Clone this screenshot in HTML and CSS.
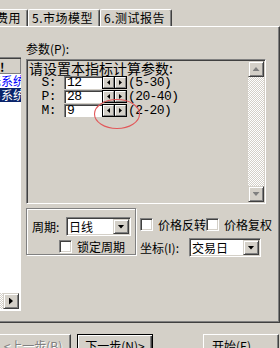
FILE: index.html
```html
<!DOCTYPE html>
<html>
<head>
<meta charset="utf-8">
<link rel="stylesheet" href="styles.css">
</head>
<body>
<div class="tabstrip">
  <div class="tab">4.交易费用</div>
  <div class="tab">5.市场模型</div>
  <div class="tab">6.测试报告</div>
</div>
<div class="panel">
  <div class="list">
    <div class="lhead">!</div>
    <div class="lrow link"><span>指标系统</span></div>
    <div class="lrow sel"><span>交易系统</span></div>
    <div class="lfill"></div>
    <div class="hscroll"><div class="dither"></div><div class="sbtn"><i class="arr-r"></i></div><div class="hwhite"></div></div>
  </div>
  <div class="main">
    <div class="plabel">参数(P):</div>
    <div class="pbox">
      <div class="pcontent">
        <div class="phead">请设置本指标计算参数:</div>
        <div class="prow"><span class="pname">S:</span><span class="pinput">12</span><span class="spin"><b><i class="tl"></i></b><b><i class="tr"></i></b></span><span class="prange">(5-30)</span></div>
        <div class="prow"><span class="pname">P:</span><span class="pinput">28</span><span class="spin"><b><i class="tl"></i></b><b><i class="tr"></i></b></span><span class="prange">(20-40)</span></div>
        <div class="prow"><span class="pname">M:</span><span class="pinput">9</span><span class="spin"><b><i class="tl"></i></b><b><i class="tr"></i></b></span><span class="prange">(2-20)</span></div>
      </div>
      <div class="vscroll">
        <div class="sbtn"><i class="arr-up"></i></div>
        <div class="track"></div>
        <div class="sbtn"><i class="arr-down"></i></div>
      </div>
    </div>
    <div class="lower">
      <div class="group">
        <div class="grow"><span class="glabel">周期:</span><div class="combo c1"><span>日线</span><b class="ddbtn"><i></i></b></div></div>
        <div class="grow2"><span class="cb"></span><span>锁定周期</span></div>
      </div>
      <div class="rcol">
        <div class="rrow"><span class="cb"></span><span class="cblabel">价格反转</span><span class="cb"></span><span class="cblabel">价格复权</span></div>
        <div class="rrow2"><span class="clabel">坐标(I):</span><div class="combo c2"><span>交易日</span><b class="ddbtn"><i></i></b></div></div>
      </div>
    </div>
  </div>
</div>
<div class="buttons">
  <div class="btn prev disabled">&lt;上一步(B)</div>
  <div class="btn next">下一步(N)&gt;</div>
  <div class="btn start">开始(E)</div>
</div>
<svg class="mark" width="48" height="32" viewBox="0 0 48 32"><ellipse cx="24" cy="16" rx="22.5" ry="14.5" fill="none" stroke="#e2585a" stroke-width="1.1"/></svg>
</body>
</html>
```
FILE: styles.css
```css
body {
  margin: 0;
  width: 280px;
  height: 348px;
  overflow: hidden;
  background: #d4d0c8;
  font-family: "Noto Sans CJK SC", sans-serif;
  font-size: 12px;
  color: #000;
  position: relative;
}
.tabstrip {
  display: flex;
  height: 26px;
  padding-top: 9px;
  box-sizing: border-box;
  margin-left: -44px;
}
.tab {
  width: 72px;
  height: 17px;
  flex: none;
  box-sizing: border-box;
  border-top: 1px solid #fff;
  border-left: 1px solid #fff;
  border-right: 1px solid #404040;
  box-shadow: inset -1px 0 #808080;
  border-radius: 2px 2px 0 0;
  padding-left: 3px;
  line-height: 16px;
  white-space: nowrap;
  overflow: hidden;
  letter-spacing: 0.5px;
}
.panel {
  display: flex;
  height: 297px;
  box-sizing: border-box;
  border-top: 1px solid #fff;
  border-right: 1px solid #404040;
  border-bottom: 1px solid #404040;
  box-shadow: inset -1px -1px #808080;
}
.list {
  width: 21px;
  height: 254px;
  margin-top: 30px;
  box-sizing: border-box;
  background: #fff;
  border-top: 1px solid #808080;
  box-shadow: inset 0 1px #404040;
  padding-top: 1px;
  display: flex;
  flex-direction: column;
  overflow: hidden;
  flex: none;
}
.lhead {
  height: 15px;
  flex: none;
  box-sizing: border-box;
  background: #d4d0c8;
  box-shadow: inset 0 -1px #808080, inset -1px 0 #808080;
  line-height: 15px;
  font-weight: bold;
}
.lrow {
  height: 14px;
  flex: none;
  display: flex;
  justify-content: flex-end;
  line-height: 14px;
  white-space: nowrap;
}
.lrow span {
  flex: none;
  margin-right: -4px;
}
.link { color: #0000ff; }
.sel { background: #0a246a; color: #fff; }
.lfill { flex: 1; }
.hscroll {
  height: 16px;
  flex: none;
  display: flex;
  margin-bottom: 2px;
}
.dither {
  width: 3px;
  background: repeating-conic-gradient(#fff 0 25%, #d4d0c8 0 50%) 0 0 / 2px 2px;
}
.hwhite { flex: 1; }
.sbtn {
  width: 16px;
  height: 16px;
  flex: none;
  box-sizing: border-box;
  background: #d4d0c8;
  border: 1px solid;
  border-color: #d4d0c8 #404040 #404040 #d4d0c8;
  box-shadow: inset 1px 1px #fff, inset -1px -1px #808080;
  display: flex;
  align-items: center;
  justify-content: center;
}
.arr-r {
  width: 4px;
  height: 7px;
  background: #000;
  clip-path: polygon(0 0, 100% 50%, 0 100%);
}
.arr-up, .arr-down {
  width: 7px;
  height: 4px;
  background: #808080;
  filter: drop-shadow(1px 1px 0 #fff);
}
.arr-up { clip-path: polygon(50% 0, 100% 100%, 0 100%); }
.arr-down { clip-path: polygon(0 0, 100% 0, 50% 100%); }
.main {
  margin-left: 5px;
  width: 242px;
  flex: none;
}
.plabel {
  height: 16px;
  line-height: 16px;
  margin-top: 14px;
  margin-bottom: 2px;
}
.pbox {
  width: 240px;
  height: 145px;
  box-sizing: border-box;
  border: 1px solid;
  border-color: #808080 #fff #fff #808080;
  box-shadow: inset 1px 1px #404040, inset -1px -1px #d4d0c8;
  padding: 1px;
  display: flex;
}
.pcontent {
  flex: 1;
  padding-left: 1px;
}
.phead {
  font-size: 14px;
  line-height: 14px;
  height: 14px;
  margin-bottom: 1px;
  white-space: nowrap;
}
.prow {
  display: flex;
  align-items: center;
  height: 13px;
  margin-bottom: 1px;
  font-family: "Liberation Mono", monospace;
  font-size: 13px;
  letter-spacing: -0.6px;
  line-height: 13px;
  white-space: nowrap;
}
.pname {
  width: 27px;
  text-align: right;
  margin-right: 8px;
}
.pinput {
  width: 38px;
  height: 13px;
  box-sizing: border-box;
  background: #fff;
  border-top: 1px solid #808080;
  border-left: 1px solid #808080;
  box-shadow: inset 1px 1px #404040;
  padding-left: 2px;
  line-height: 12px;
}
.spin {
  display: flex;
  gap: 1px;
  padding: 1px;
  background: #000;
  height: 13px;
  box-sizing: border-box;
}
.spin b {
  width: 11px;
  height: 11px;
  box-sizing: border-box;
  background: #d4d0c8;
  border-top: 1px solid #fff;
  border-left: 1px solid #fff;
  border-right: 1px solid #808080;
  border-bottom: 1px solid #808080;
  display: flex;
  align-items: center;
  justify-content: center;
}
.tl, .tr {
  width: 3px;
  height: 5px;
  background: #000;
}
.tl { clip-path: polygon(100% 0, 100% 100%, 0 50%); }
.tr { clip-path: polygon(0 0, 100% 50%, 0 100%); }
.prange { margin-left: 1px; }
.vscroll {
  width: 16px;
  flex: none;
  display: flex;
  flex-direction: column;
}
.track {
  flex: 1;
  background: repeating-conic-gradient(#fff 0 25%, #d4d0c8 0 50%) 0 0 / 2px 2px;
}
.lower {
  display: flex;
  margin-top: 4px;
}
.group {
  width: 110px;
  height: 47px;
  flex: none;
  box-sizing: border-box;
  border: 1px solid #808080;
  box-shadow: inset 1px 1px #fff, 1px 1px #fff;
  padding: 8px 0 0 5px;
}
.grow {
  display: flex;
  align-items: center;
  height: 19px;
}
.glabel { width: 34px; flex: none; }
.combo {
  height: 19px;
  flex: none;
  box-sizing: border-box;
  border: 1px solid;
  border-color: #808080 #fff #fff #808080;
  box-shadow: inset 1px 1px #404040, inset -1px -1px #d4d0c8;
  background: #fff;
  padding: 1px;
  display: flex;
}
.combo span {
  flex: 1;
  padding-left: 1px;
  line-height: 15px;
  white-space: nowrap;
}
.c1 { width: 65px; }
.c2 { width: 72px; }
.ddbtn {
  width: 16px;
  flex: none;
  box-sizing: border-box;
  background: #d4d0c8;
  border: 1px solid;
  border-color: #d4d0c8 #404040 #404040 #d4d0c8;
  box-shadow: inset 1px 1px #fff, inset -1px -1px #808080;
  display: flex;
  align-items: center;
  justify-content: center;
}
.ddbtn i {
  width: 7px;
  height: 4px;
  background: #000;
  clip-path: polygon(0 0, 100% 0, 50% 100%);
}
.grow2 {
  display: flex;
  align-items: center;
  height: 13px;
  margin-top: 4px;
  margin-left: 27px;
  white-space: nowrap;
}
.cb {
  width: 13px;
  height: 13px;
  flex: none;
  box-sizing: border-box;
  border: 1px solid;
  border-color: #808080 #fff #fff #808080;
  box-shadow: inset 1px 1px #404040, inset -1px -1px #d4d0c8;
  background: #fff;
  margin-right: 5px;
}
.rcol {
  margin-left: 4px;
  padding-top: 10px;
}
.rrow {
  display: flex;
  align-items: center;
  height: 13px;
  white-space: nowrap;
}
.cblabel { width: 48px; flex: none; }
.rrow2 {
  display: flex;
  align-items: center;
  margin-top: 7px;
  white-space: nowrap;
}
.clabel { width: 49px; flex: none; }
.buttons {
  display: flex;
  margin-top: 11px;
  margin-left: -5px;
}
.btn {
  width: 76px;
  height: 23px;
  flex: none;
  box-sizing: border-box;
  border: 1px solid;
  border-color: #fff #404040 #404040 #fff;
  box-shadow: inset -1px -1px #808080;
  text-align: center;
  line-height: 21px;
  white-space: nowrap;
}
.disabled {
  color: #808080;
  text-shadow: 1px 1px #fff;
}
.next {
  margin-left: 6px;
  border: 1px solid #000;
  box-shadow: inset 1px 1px #fff, inset -1px -1px #404040, inset -2px -2px #808080;
}
.start {
  margin-left: 50px;
  text-align: left;
  padding-left: 8px;
}
.mark {
  position: absolute;
  left: 93px;
  top: 98px;
  pointer-events: none;
}
```
